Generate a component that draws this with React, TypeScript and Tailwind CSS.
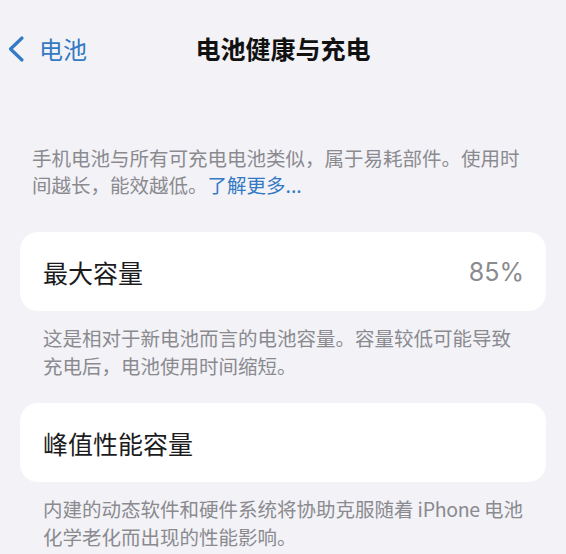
import React from 'react';

const cjk = { fontFamily: '"Noto Sans CJK SC", "Noto Sans", sans-serif' };

function Footnote({ children }: { children: React.ReactNode }) {
  return (
    <p className="mt-[13px] whitespace-nowrap px-[23px] text-[19.5px] leading-[28px] text-[#8a8a8f]">
      {children}
    </p>
  );
}

function Row({ label, value }: { label: string; value?: string }) {
  return (
    <div className="flex h-[79px] items-center justify-between rounded-[18px] bg-white pl-[23px] pr-[22px] pt-[3px]">
      <span className="text-[25px] text-[#1c1c1e]">{label}</span>
      {value && (
        <span className="text-[25px] text-[#8a8a8f]" style={{ fontFamily: 'Inter, "Noto Sans", sans-serif' }}>
          {value}
        </span>
      )}
    </div>
  );
}

export default function App() {
  return (
    <div className="h-[554px] w-[566px] overflow-hidden bg-[#f2f2f7]" style={cjk}>
      <header className="relative flex h-[98px] items-center">
        <button className="flex items-center gap-[13px] pl-[6px] text-[24px] text-[#3479c4]">
          <svg width="20" height="28" viewBox="0 0 20 28" fill="none">
            <path d="M16 3 L4.5 14 L16 25" stroke="#3479c4" strokeWidth="3.2" strokeLinecap="round" strokeLinejoin="round" />
          </svg>
          <span>电池</span>
        </button>
        <h1 className="absolute left-1/2 -translate-x-1/2 text-[25px] font-bold text-[#111]">电池健康与充电</h1>
      </header>

      <main className="px-5">
        <p className="mt-[46px] pl-3 text-[19.5px] leading-[27px] text-[#8a8a8f]">
          手机电池与所有可充电电池类似，属于易耗部件。使用时
          <br />
          间越长，能效越低。<span className="text-[#3479c4]">了解更多...</span>
        </p>

        <div className="mt-[34px]">
          <Row label="最大容量" value="85%" />
          <Footnote>
            这是相对于新电池而言的电池容量。容量较低可能导致
            <br />
            充电后，电池使用时间缩短。
          </Footnote>
        </div>

        <div className="mt-[23px]">
          <Row label="峰值性能容量" />
          <Footnote>
            内建的动态软件和硬件系统将协助克服随着<span className="tracking-[-0.3px]"> iPhone </span>电池
            <br />
            化学老化而出现的性能影响。
          </Footnote>
        </div>
      </main>
    </div>
  );
}
